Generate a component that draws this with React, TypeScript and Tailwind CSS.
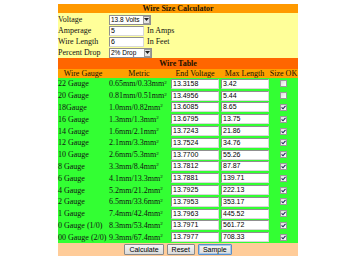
import React from 'react';

interface WireRow {
  gauge: string;
  dia: string;
  area: string;
  endVoltage: string;
  maxLength: string;
  ok: boolean;
}

const rows: WireRow[] = [
  { gauge: '22 Gauge', dia: '0.65mm', area: '0.33mm', endVoltage: '13.3158', maxLength: '3.42', ok: false },
  { gauge: '20 Gauge', dia: '0.81mm', area: '0.51mm', endVoltage: '13.4956', maxLength: '5.44', ok: false },
  { gauge: '18Gauge', dia: '1.0mm', area: '0.82mm', endVoltage: '13.6085', maxLength: '8.65', ok: true },
  { gauge: '16 Gauge', dia: '1.3mm', area: '1.3mm', endVoltage: '13.6795', maxLength: '13.75', ok: true },
  { gauge: '14 Gauge', dia: '1.6mm', area: '2.1mm', endVoltage: '13.7243', maxLength: '21.86', ok: true },
  { gauge: '12 Gauge', dia: '2.1mm', area: '3.3mm', endVoltage: '13.7524', maxLength: '34.76', ok: true },
  { gauge: '10 Gauge', dia: '2.6mm', area: '5.3mm', endVoltage: '13.7700', maxLength: '55.26', ok: true },
  { gauge: '8 Gauge', dia: '3.3mm', area: '8.4mm', endVoltage: '13.7812', maxLength: '87.87', ok: true },
  { gauge: '6 Gauge', dia: '4.1mm', area: '13.3mm', endVoltage: '13.7881', maxLength: '139.71', ok: true },
  { gauge: '4 Gauge', dia: '5.2mm', area: '21.2mm', endVoltage: '13.7925', maxLength: '222.13', ok: true },
  { gauge: '2 Gauge', dia: '6.5mm', area: '33.6mm', endVoltage: '13.7953', maxLength: '353.17', ok: true },
  { gauge: '1 Gauge', dia: '7.4mm', area: '42.4mm', endVoltage: '13.7963', maxLength: '445.52', ok: true },
  { gauge: '0 Gauge (1/0)', dia: '8.3mm', area: '53.4mm', endVoltage: '13.7971', maxLength: '561.72', ok: true },
  { gauge: '00 Gauge (2/0)', dia: '9.3mm', area: '67.4mm', endVoltage: '13.7977', maxLength: '708.33', ok: true },
];

const serif = "font-['Liberation_Serif','Times_New_Roman',serif]";
const sans = "font-['Liberation_Sans',Arial,sans-serif]";

const TextBox = ({ value, width }: { value: string; width: string }) => (
  <div
    className={`${sans} ${width} h-[10px] bg-white border border-[#8f8f8f] border-r-[#d8d8d8] border-b-[#d8d8d8] text-[7px] leading-[8px] pl-[1px] text-black overflow-hidden whitespace-nowrap`}
  >
    {value}
  </div>
);

const DropDown = ({ value, width }: { value: string; width: string }) => (
  <div className={`${sans} ${width} h-[10px] bg-white border border-[#8f8f8f] flex items-center text-[6.5px] leading-[8px] text-black`}>
    <span className="flex-1 pl-[1px] whitespace-nowrap">{value}</span>
    <span className="w-[7px] h-[8px] bg-[#e4e4e4] border border-[#9a9a9a] flex items-center justify-center">
      <svg width="5" height="3" viewBox="0 0 5 3">
        <path d="M0 0 L5 0 L2.5 3 Z" fill="#222" />
      </svg>
    </span>
  </div>
);

const CheckBox = ({ checked }: { checked: boolean }) => (
  <span className="w-[7px] h-[7px] border border-[#9a9a9a] bg-gradient-to-br from-[#dcdcdc] to-white flex items-center justify-center">
    {checked && (
      <svg width="5" height="5" viewBox="0 0 5 5">
        <path d="M0.6 2.4 L2 3.8 L4.5 0.8" stroke="#1f2a5a" strokeWidth="1.1" fill="none" />
      </svg>
    )}
  </span>
);

const Button = ({ label, focused }: { label: string; focused?: boolean }) => (
  <div
    className={`${sans} h-[11px] px-[4px] flex items-center text-[7px] text-black rounded-[1px] bg-gradient-to-b from-[#f6f6f6] to-[#dadada] border ${
      focused ? 'border-[#5a8fc8] shadow-[inset_0_0_0_1px_#a9c8ea]' : 'border-[#8a8a8a]'
    }`}
  >
    {label}
  </div>
);

const FormRow = ({ label, children }: { label: string; children: React.ReactNode }) => (
  <div className="flex items-center h-[11px]">
    <div className="w-[51px] whitespace-nowrap">{label}</div>
    {children}
  </div>
);

const App: React.FC = () => {
  return (
    <div className={`${serif} w-[350px] h-[261px] bg-white text-[8px] leading-[9px] text-[#111]`}>
      <div className="ml-[58px] pt-[4px] w-[240px]">
        <div className="h-[9px] bg-[#ff9900] text-center font-bold text-[#221100]">Wire Size Calculator</div>

        <div className="bg-[#ffff99] pt-[1px] pb-[1px] h-[45px]">
          <FormRow label="Voltage">
            <DropDown value="13.8 Volts" width="w-[42px]" />
          </FormRow>
          <FormRow label="Amperage">
            <TextBox value="5" width="w-[35px]" />
            <span className="ml-[3px]">In Amps</span>
          </FormRow>
          <FormRow label="Wire Length">
            <TextBox value="6" width="w-[35px]" />
            <span className="ml-[3px]">In Feet</span>
          </FormRow>
          <FormRow label="Percent Drop">
            <DropDown value="2% Drop" width="w-[43px]" />
          </FormRow>
        </div>

        <div className="h-[11px] bg-[#ff6600] text-center font-bold text-[#221100] flex items-center justify-center">Wire Table</div>

        <div className="grid grid-cols-[50px_62px_50px_49px_29px] h-[9px] bg-[#ffa000] text-center text-[#221100] items-center">
          <div>Wire Gauge</div>
          <div>Metric</div>
          <div className="whitespace-nowrap">End Voltage</div>
          <div className="whitespace-nowrap">Max Length</div>
          <div className="whitespace-nowrap">Size OK</div>
        </div>

        <div className="bg-[#33ff33]">
          {rows.map((r) => (
            <div key={r.gauge} className="grid grid-cols-[50px_62px_50px_49px_29px] h-[11.8px] items-center">
              <div className="whitespace-nowrap">{r.gauge}</div>
              <div className="whitespace-nowrap pl-[1px]">
                {r.dia}/{r.area}
                <sup className="text-[5px]">2</sup>
              </div>
              <div className="pl-[1px]">
                <TextBox value={r.endVoltage} width="w-[48px]" />
              </div>
              <div className="pl-[1px]">
                <TextBox value={r.maxLength} width="w-[48px]" />
              </div>
              <div className="flex justify-center">
                <CheckBox checked={r.ok} />
              </div>
            </div>
          ))}
        </div>

        <div className="h-[13px] bg-[#ffcc99] flex items-center justify-center gap-[3px]">
          <Button label="Calculate" />
          <Button label="Reset" />
          <Button label="Sample" focused />
        </div>
      </div>
    </div>
  );
};

export default App;
